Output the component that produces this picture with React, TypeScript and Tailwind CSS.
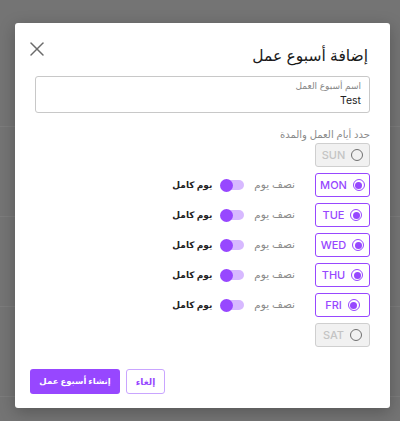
import React from "react";

function Radio({ on }: { on: boolean }) {
  return on ? (
    <span className="w-[12px] h-[12px] rounded-full border-[1.5px] border-[#9747ff] flex items-center justify-center">
      <span className="w-[7px] h-[7px] rounded-full bg-[#9747ff]" />
    </span>
  ) : (
    <span className="w-[12px] h-[12px] rounded-full border border-[#6f6f6f]" />
  );
}

function Toggle() {
  return (
    <span className="relative w-[24px] h-[14px] flex items-center">
      <span className="absolute left-[2px] right-0 h-[10px] rounded-full bg-[#d7b9ff]" />
      <span className="absolute left-0 w-[13px] h-[13px] rounded-full bg-[#9747ff]" />
    </span>
  );
}

const days = [
  { d: "SUN", on: false },
  { d: "MON", on: true },
  { d: "TUE", on: true },
  { d: "WED", on: true },
  { d: "THU", on: true },
  { d: "FRI", on: true },
  { d: "SAT", on: false },
];

export default function App() {
  const font = { fontFamily: "Inter, 'DejaVu Sans', 'Noto Sans', sans-serif" };
  return (
    <div className="relative w-[400px] h-[421px] overflow-hidden bg-[#747474]" style={font}>
      <div className="flex flex-col">
        <div className="h-[127px] border-b border-[#7c7c7c]" />
        <div className="h-[90px] border-b border-[#7c7c7c]" />
        <div className="h-[90px] border-b border-[#7c7c7c]" />
        <div className="h-[90px] border-b border-[#7c7c7c]" />
      </div>
      <div
        dir="rtl"
        className="absolute left-[15px] top-[23px] w-[375px] h-[385px] bg-white rounded-[3px] shadow-[0_4px_16px_rgba(0,0,0,0.25)] flex flex-col"
      >
        <div className="flex items-center justify-between pr-[22px] pl-[10px] pt-[18px] h-[53px]">
          <div className="text-[15.5px] text-[#1a1a1a] leading-none -mt-[5px]">إضافة أسبوع عمل</div>
          <svg width="24" height="24" viewBox="0 0 24 24" fill="none" stroke="#6b6b6b" strokeWidth="1.5" strokeLinecap="round" className="-mt-[19px]">
            <path d="M18 6 6 18" />
            <path d="m6 6 12 12" />
          </svg>
        </div>
        <div className="px-[20px]">
          <div className="h-[37px] border border-[#c8c8c8] rounded-[3px] px-[8px] pt-[2px] flex flex-col">
            <div className="text-[9px] text-[#888] leading-[14px]">اسم أسبوع العمل</div>
            <div className="text-[10.5px] text-[#222] leading-[16px]">Test</div>
          </div>
          <div className="mt-[14px] text-[10px] text-[#8a8a8a] leading-[14px]">حدد أيام العمل والمدة</div>
          <div className="mt-[2px] flex flex-col gap-[6px]">
            {days.map((x) => (
              <div key={x.d} className="flex items-center h-[24px]">
                <div
                  dir="ltr"
                  className={
                    x.on
                      ? "w-[55px] h-[24px] rounded-[3px] border border-[#9747ff] bg-white flex items-center justify-center gap-[6px]"
                      : "w-[55px] h-[24px] rounded-[3px] border border-[#cfcfcf] bg-[#f1f1f1] flex items-center justify-center gap-[6px]"
                  }
                >
                  <span className={x.on ? "text-[11px] text-[#9747ff] font-medium" : "text-[11px] text-[#c4c4c4] font-medium"}>{x.d}</span>
                  <Radio on={x.on} />
                </div>
                {x.on && (
                  <div className="flex items-center mr-[20px]">
                    <span className="text-[10.5px] text-[#8a8a8a]">نصف يوم</span>
                    <span className="mr-[10px]" dir="ltr"><Toggle /></span>
                    <span className="mr-[8px] text-[9px] font-bold text-[#222]">يوم كامل</span>
                  </div>
                )}
              </div>
            ))}
          </div>
        </div>
        <div className="mt-auto mb-[14px] flex justify-end gap-[6px] pl-[15px]">
          <button className="h-[25px] w-[39px] rounded-[3px] border border-[#c9a5ff] text-[#9747ff] text-[9px] font-bold bg-white">إلغاء</button>
          <button className="h-[25px] w-[90px] rounded-[3px] bg-[#9747ff] text-white text-[8.5px] font-bold">إنشاء أسبوع عمل</button>
        </div>
      </div>
    </div>
  );
}
